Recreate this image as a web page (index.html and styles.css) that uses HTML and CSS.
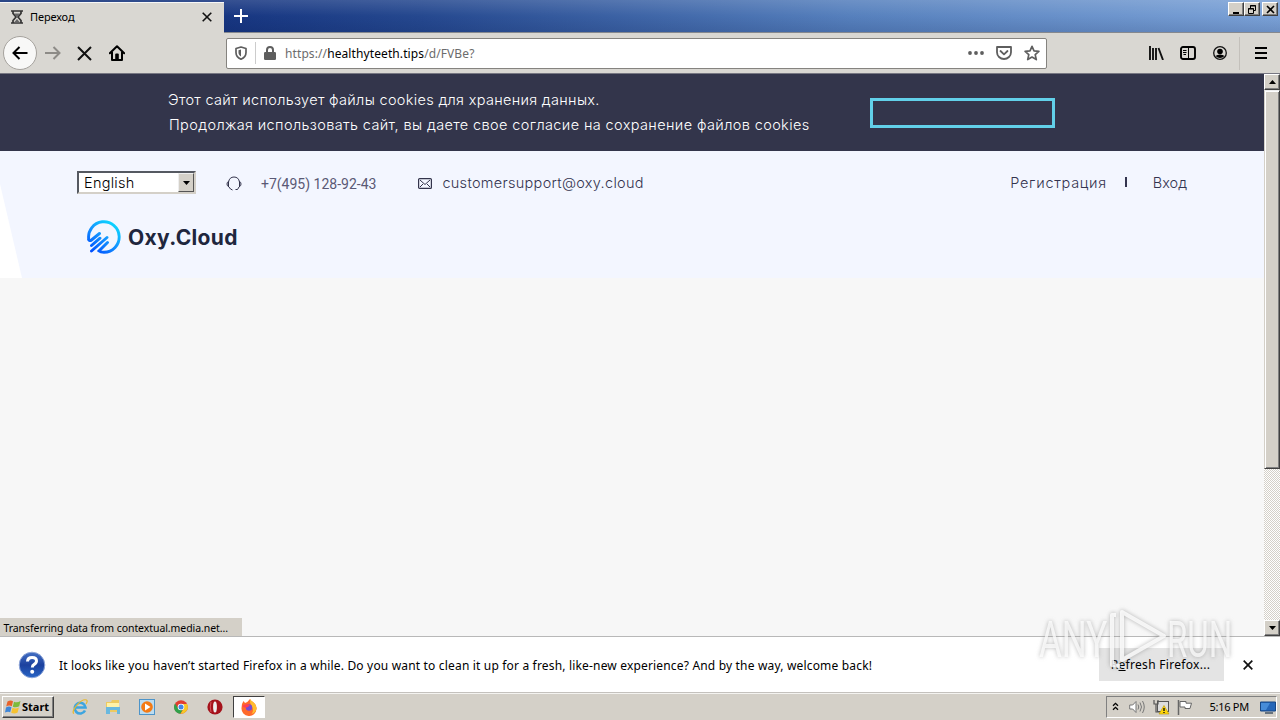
FILE: index.html
```html
<!DOCTYPE html>
<html lang="ru">
<head>
<meta charset="utf-8">
<title>Переход</title>
<link rel="stylesheet" href="styles.css">
</head>
<body>
<div class="screen">
  <header class="titlebar">
    <div class="tab">
      <svg class="hourglass" width="12" height="14" viewBox="0 0 12 14"><path d="M0 1h12M0 13h12M2 1v2.500L5 7l-3 3.500V13M10 1v2.500L7 7l3 3.500V13" fill="none" stroke="#333" stroke-width="1.700"/><path d="M3 3.500h6L6 7zM6 9l3 3.500H3z" fill="#666"/></svg>
      <span class="tab-title">Переход</span>
      <svg class="tab-close" width="10" height="10" viewBox="0 0 10 10"><path d="M.7.7l8.600 8.600M9.300.7L.7 9.300" stroke="#111" stroke-width="1.600"/></svg>
    </div>
    <svg class="new-tab" width="14" height="14" viewBox="0 0 14 14"><path d="M7 0v14M0 7h14" stroke="#fff" stroke-width="2"/></svg>
    <div class="window-buttons">
      <span class="win-btn"><svg width="13" height="11" viewBox="0 0 13 11"><path d="M3 9h6" stroke="#000" stroke-width="2"/></svg></span>
      <span class="win-btn"><svg width="13" height="11" viewBox="0 0 13 11"><path d="M4.500 4V1.500h5v5H8M4 2h6M2.500 4.500h5v5h-5zM2 5h6" fill="none" stroke="#000"/></svg></span>
      <span class="win-btn close"><svg width="13" height="11" viewBox="0 0 13 11"><path d="M3 2l7 7M10 2L3 9" stroke="#000" stroke-width="1.600"/></svg></span>
    </div>
  </header>

  <nav class="toolbar">
    <span class="back"><svg width="16" height="14" viewBox="0 0 16 14"><path d="M15.500 7H1.500M7.500 1l-6 6 6 6" fill="none" stroke="#000" stroke-width="2"/></svg></span>
    <svg class="forward" width="16" height="14" viewBox="0 0 16 14"><path d="M0 7h14.500M8.500 1l6 6-6 6" fill="none" stroke="#8d8b87" stroke-width="2"/></svg>
    <svg class="stop" width="15" height="15" viewBox="0 0 15 15"><path d="M1 1l13 13M14 1L1 14" stroke="#111" stroke-width="2"/></svg>
    <svg class="home" width="16" height="16" viewBox="0 0 16 16"><path d="M.8 8.200L8 1.200l7.200 7M3 7v8h10V7" fill="none" stroke="#000" stroke-width="2" stroke-linejoin="round" stroke-linecap="round"/><path d="M6.200 15V9.500q0-1 1-1h1.600q1 0 1 1V15z"/></svg>
    <div class="urlbar">
      <svg class="shield" width="12" height="14" viewBox="0 0 12 14"><path d="M6 1l5 1.500v4C11 10 9 12 6 13.200 3 12 1 10 1 6.500v-4z" fill="none" stroke="#5e5e5e" stroke-width="1.700" stroke-linejoin="round"/><path d="M6 3.500v7C4.300 9.500 3.500 8.300 3.500 6.500V4.200z" fill="#5e5e5e"/></svg>
      <i class="url-rule"></i>
      <svg class="lock" width="12" height="14" viewBox="0 0 12 14"><path d="M3 7V4a3 3 0 0 1 6 0v3" fill="none" stroke="#5e5e5e" stroke-width="2"/><rect y="6" width="12" height="8" rx="1.300" fill="#5e5e5e"/></svg>
      <span class="url">https://<b>healthyteeth.tips</b>/d/FVBe?</span>
      <svg class="dots" width="16" height="4" viewBox="0 0 16 4" fill="#5e5e5e"><circle cx="2" cy="2" r="1.900"/><circle cx="8" cy="2" r="1.900"/><circle cx="14" cy="2" r="1.900"/></svg>
      <svg class="pocket" width="16" height="14" viewBox="0 0 16 14" fill="none" stroke="#5e5e5e" stroke-width="1.800" stroke-linejoin="round" stroke-linecap="round"><path d="M1 1h14v5.200a7 6.800 0 0 1-14 0z"/><path d="M4.500 5L8 8.300 11.500 5"/></svg>
      <svg class="star" width="16" height="16" viewBox="0 0 16 16"><path d="M8 1.300l2 4.500 4.900.5-3.700 3.300 1.100 5L8 12.100l-4.300 2.500 1.100-5L1.100 6.300 6 5.800z" fill="none" stroke="#5e5e5e" stroke-width="1.700" stroke-linejoin="round"/></svg>
    </div>
    <div class="tools">
      <svg width="16" height="14" viewBox="0 0 16 14"><path d="M2 0v14M5 2v12M8 2v12M10.500 2l4.500 12" stroke="#111" stroke-width="1.900"/></svg>
      <svg width="16" height="14" viewBox="0 0 16 14"><rect x="1" y="1" width="14" height="12" rx="2" fill="none" stroke="#000" stroke-width="1.900"/><path d="M8.500 1v12M3 4.500h3.500M3 6.500h3.500M3.500 8.500H6" stroke="#000"/></svg>
      <svg width="14" height="14" viewBox="0 0 14 14"><circle cx="7" cy="7" r="6.300" fill="none" stroke="#111" stroke-width="1.300"/><circle cx="7" cy="5.500" r="2.800"/><path d="M2.500 10q1.500-1.600 4.500-1.600t4.500 1.600Q9.500 12 7 12t-4.500-2z"/></svg>
      <i class="tool-rule"></i>
      <svg width="12" height="12" viewBox="0 0 12 12"><path d="M0 1h12M0 6h12M0 11h12" stroke="#000" stroke-width="2"/></svg>
    </div>
  </nav>

  <main class="viewport">
    <div class="page">
      <section class="cookies">
        <p class="cookie-text"><span class="line1">Этот сайт использует файлы cookies для хранения данных.</span><br><span class="line2">Продолжая использовать сайт, вы даете свое согласие на сохранение файлов cookies</span></p>
        <div class="accept"></div>
      </section>
      <section class="site-header">
        <svg class="wedge" width="22" height="94" viewBox="0 0 22 94"><path d="M0 0l22 94H0z" fill="#fff"/></svg>
        <div class="contact-row">
          <div class="select"><span>English</span><i class="drop"><svg width="7" height="4" viewBox="0 0 7 4"><path d="M0 0h7L3.500 4z"/></svg></i></div>
          <svg class="headset" width="16" height="15" viewBox="0 0 16 15" fill="none" stroke="#33344c"><path d="M2.500 11V6Q3.500 1 8 1t5.500 5v5"/><path d="M2.500 5.500Q1 6 1 8t1.500 2.500M13.500 5.500Q15 6 15 8t-1.500 2.500M3 11l1.500 2M13 11l-1.500 2.500H9.500M4.500 13l2 1"/></svg>
          <span class="phone">+7(495) 128-92-43</span>
          <svg class="mail" width="14" height="11" viewBox="0 0 14 11" fill="none" stroke="#33344c"><rect x=".6" y=".6" width="12.800" height="9.800" rx="1" stroke-width="1.200"/><path d="M2 2l5 4.500L12 2M2 9l3-3M12 9L9 6"/></svg>
          <span class="email">customersupport@oxy.cloud</span>
          <span class="register">Регистрация</span>
          <i class="sep"></i>
          <span class="login">Вход</span>
        </div>
        <div class="brand">
          <svg width="34" height="34" viewBox="0 0 34 34"><defs><linearGradient id="oxy" gradientUnits="userSpaceOnUse" x1="28" y1="2" x2="6" y2="32"><stop offset="0" stop-color="#0cdcff"/><stop offset=".5" stop-color="#1496ff"/><stop offset="1" stop-color="#0050ff"/></linearGradient></defs><g fill="none" stroke="url(#oxy)" stroke-width="2.900" stroke-linecap="round"><path d="M1.800 19.500A15.300 15.300 0 1 1 17 32.300Q13.500 32.300 12 31L20.500 22.500"/><path d="M1.800 19.500Q2.500 21.500 4.500 20L12.500 13.500M4.500 25.500L13 18.200M4.500 31L20 17.500"/></g></svg>
          <span>Oxy.Cloud</span>
        </div>
      </section>
      <div class="page-space"></div>
      <div class="status">Transferring data from contextual.media.net...</div>
    </div>
    <aside class="scrollbar">
      <span class="sb-btn"><svg width="7" height="4" viewBox="0 0 7 4"><path d="M0 4h7L3.500 0z"/></svg></span>
      <span class="thumb"></span>
      <span class="track"></span>
      <span class="sb-btn"><svg width="7" height="4" viewBox="0 0 7 4"><path d="M0 0h7L3.500 4z"/></svg></span>
    </aside>
  </main>

  <section class="notice">
    <svg class="help" width="28" height="28" viewBox="0 0 28 28"><defs><linearGradient id="hb" x1="0" y1="0" x2="0" y2="1"><stop offset="0" stop-color="#4470c4"/><stop offset=".5" stop-color="#1c419e"/><stop offset="1" stop-color="#2865c6"/></linearGradient></defs><circle cx="14" cy="14" r="12.800" fill="url(#hb)" stroke="#8fa6d8"/><path d="M9.500 10.500q.2-4 4.600-4 4.400 0 4.400 3.600 0 2-2.300 3.200-1.900 1-1.900 3.200" fill="none" stroke="#fff" stroke-width="3"/><circle cx="14.200" cy="20.800" r="2" fill="#fff"/></svg>
    <span class="notice-text">It looks like you haven’t started Firefox in a while. Do you want to clean it up for a fresh, like-new experience? And by the way, welcome back!</span>
    <span class="refresh"><span>R<u>e</u>fresh Firefox...</span></span>
    <svg class="notice-close" width="10" height="10" viewBox="0 0 10 10"><path d="M.7.7l8.600 8.600M9.300.7L.7 9.300" stroke="#111" stroke-width="1.700"/></svg>
  </section>

  <footer class="taskbar">
    <div class="start"><svg width="17" height="16" viewBox="0 0 17 16"><path d="M2.500 2.500Q5.500.5 8 2.200L6.800 7.200Q4 5.800 1.200 7.500z" fill="#e8622a"/><path d="M9 2.700q3 1.500 6.500-.7l-1.300 5.300Q11 9 7.800 7.700z" fill="#7dbb3c"/><path d="M1 8.500q2.800-1.600 5.500-.3l-1.300 5Q3 12 0 13.500z" fill="#3e86d8"/><path d="M7.500 8.700q3 1.500 6.400-.3l-1.300 5.200Q9.500 15.500 6.200 13.800z" fill="#f6c231"/></svg><b>Start</b></div>
    <div class="quick">
      <svg width="18" height="18" viewBox="0 0 18 18"><path d="M14 12.500A5.400 5.400 0 1 1 14.500 9.500H5" fill="none" stroke="#3da5e0" stroke-width="2.600"/><path d="M3 15.500C-1 14 10 0 15.500 2q1.500 1-.5 4" fill="none" stroke="#e7b82d" stroke-width="1.200"/></svg>
      <svg width="18" height="18" viewBox="0 0 18 18"><path d="M2 4h5l1-2h7v12H2z" fill="#edca61"/><path d="M3 5h12v4H3z" fill="#fff2a8"/><path d="M2 9h14v7h-3v-4H6v4H2z" fill="#69b8df"/></svg>
      <svg width="18" height="18" viewBox="0 0 18 18"><rect x="1.500" y="1.500" width="15" height="15" fill="#bcdcf0" stroke="#4d94c9"/><circle cx="9" cy="9" r="5.800" fill="#f47a14"/><path d="M7 5.500v7l5.500-3.500z" fill="#fff"/></svg>
      <svg width="18" height="18" viewBox="0 0 18 18"><circle cx="9" cy="9" r="6.800" fill="#e13d30"/><path d="M3 5.500A6.800 6.800 0 0 0 8.500 15.800L11.500 10 6 10z" fill="#30a14b"/><path d="M9.500 6h5.600A6.800 6.800 0 0 1 8.500 15.800L12 10z" fill="#f7c927"/><circle cx="9" cy="9" r="3.300" fill="#fff"/><circle cx="9" cy="9" r="2.500" fill="#4285e8"/></svg>
      <svg width="18" height="18" viewBox="0 0 18 18"><circle cx="9" cy="9" r="7.600" fill="#a5121b"/><ellipse cx="9" cy="9" rx="1.900" ry="5.500" fill="#eee"/><path d="M5 4Q3.500 9 5 14" stroke="#d8525a" fill="none"/></svg>
      <span class="running"><svg width="18" height="18" viewBox="0 0 18 18"><path d="M2 6l1.500-3 1.500 2q3-1 5-4 1 2 3 3 4 3 3.500 7A7.500 7.500 0 0 1 1.500 10z" fill="#ff6a2b"/><path d="M10 1q1 2 3 3 4 3 3.500 7-1 4-5 5 3-4 0-8-2-3-1.500-7z" fill="#ffbd2e"/><circle cx="9" cy="9.500" r="3.200" fill="#784bd1"/><path d="M2 8q4 4 8-1-4-2-8 1z" fill="#ff4051"/></svg></span>
    </div>
    <div class="tray">
      <svg class="chevrons" width="7" height="9" viewBox="0 0 7 9"><path d="M1 3.800l2.500-2.500L6 3.800M1 7.800l2.500-2.500L6 7.800" fill="none" stroke="#000" stroke-width="1.300"/></svg>
      <svg class="speaker" width="16" height="14" viewBox="0 0 16 14"><path d="M.7 5h3L7 1.500v11L3.700 9h-3z" fill="#fff" stroke="#777"/><path d="M9 4.500q1.500 2.500 0 5M11 2.500q3 4.500 0 9M13.500 1q3.500 6 0 12" fill="none" stroke="#777"/></svg>
      <svg class="network" width="17" height="16" viewBox="0 0 17 16"><rect x="4.500" y="2.500" width="11" height="10" fill="#ddd" stroke="#555"/><path d="M1 1v4h4V1M3 5v8h5" fill="none" stroke="#555" stroke-width="1.200"/><path d="M11 6.500l5 8.500H6z" fill="#ffd60a" stroke="#b89600" stroke-width=".6"/><path d="M11 9v3M11 13v1" stroke="#111" stroke-width="1.400"/></svg>
      <svg class="flag" width="16" height="15" viewBox="0 0 16 15"><path d="M1.500 0v15" stroke="#666" stroke-width="1.500"/><path d="M3 1.500h6v1.700h5.500L13 8.500H8V7H3z" fill="#fff" stroke="#666"/></svg>
      <span class="clock">5:16 PM</span>
      <svg class="desktop" width="16" height="13" viewBox="0 0 16 13"><path d="M.5 1h15v9H.5z" fill="#2566b8" stroke="#174785"/><path d="M1 2h9L6 9H1z" fill="#478cd8"/><path d="M5 12h8" stroke="#456" stroke-width="1.500"/></svg>
    </div>
  </footer>

  <div class="watermark">
    <svg width="204" height="66" viewBox="0 0 204 66">
      <g fill="#fff" fill-opacity=".75">
        <text transform="translate(4 51) scale(.7 1)">ANY</text>
        <text transform="translate(132 51) scale(.66 1)">RUN</text>
      </g>
      <g fill="none" stroke="#fff" stroke-opacity=".8" stroke-width="4" stroke-linejoin="round">
        <path d="M87 6l42 24-42 24z"/>
        <path d="M81 9h-4v50l8 1"/>
      </g>
    </svg>
  </div>
</div>
</body>
</html>
```
FILE: styles.css
```css
* { box-sizing: border-box; }
body { margin: 0; font-family: "Noto Sans", "Open Sans", sans-serif; color: #000; }
svg { display: block; flex: none; }
i, b { font-style: normal; }
span { white-space: nowrap; }
.screen { position: relative; width: 1280px; height: 720px; display: flex; flex-direction: column; overflow: hidden; background: #d8d5d0; }

.titlebar { height: 33px; flex: none; display: flex; background: linear-gradient(180deg, #ffffff22, #ffffff00 50%, #00104022), linear-gradient(90deg, #0c2c74 0, #173681 225px, #25488f 420px, #5680bd 850px, #7ba2d7 1280px); border-bottom: 1px solid #85888e; }
.tab { width: 224px; height: 33px; margin-top: 2px; padding: 0 12px 0 11px; display: flex; align-items: center; background: #d9d7d2; border-top: 1px solid #f7f7f7; }
.tab-title { margin-left: 7px; padding-bottom: 5px; font-size: 11px; letter-spacing: -.1px; }
.hourglass, .tab-close { margin-bottom: 4px; }
.tab-close { margin-left: auto; }
.new-tab { margin: 9px 0 0 10px; }
.window-buttons { margin: 2px 2px 0 auto; display: flex; height: 14px; }
.win-btn, .sb-btn { display: flex; align-items: center; justify-content: center; background: #d4d0c8; border: 1px solid; border-color: #fff #404040 #404040 #fff; box-shadow: inset -1px -1px #808080; }
.win-btn { width: 16px; }
.close { margin-left: 2px; }

.toolbar { height: 41px; flex: none; display: flex; align-items: center; padding: 0 13px 0 3px; background: #d9d7d2; border-bottom: 1px solid #777782; }
.back { width: 34px; height: 34px; border-radius: 50%; background: #f8f8f7; border: 1px solid #a5a29d; display: flex; align-items: center; justify-content: center; }
.forward { margin-left: 8px; }
.stop { margin-left: 16px; }
.home { margin-left: 17px; }
.urlbar { width: 821px; height: 31px; margin-left: 101px; display: flex; align-items: center; padding: 0 6px 0 8px; background: #fff; border: 1px solid #85837f; border-radius: 2px; }
.url-rule { width: 1px; height: 22px; margin: 0 8px; background: #ccc; }
.url { margin-left: 9px; font-size: 12px; color: #6c6c6c; letter-spacing: .1px; }
.url b { font-weight: 400; color: #000; }
.dots { margin-left: auto; }
.pocket, .star { margin-left: 12px; }
.tools { margin-left: auto; display: flex; align-items: center; gap: 16px; }
.tools svg:nth-child(3) { margin-left: 1px; }
.tool-rule { width: 1px; height: 33px; margin: 0 -1px 0 -4px; background: #c3c0bb; }

.viewport { height: 562px; flex: none; display: flex; }
.page { width: 1264px; display: flex; flex-direction: column; background: #f7f7f7; }
.cookies { height: 77px; flex: none; display: flex; background: #33354b; color: #fff; padding-left: 168px; }
.cookie-text { width: 702px; margin: 13px 0 0; font: 300 14.500px/25px Inter, sans-serif; }
.line1 { letter-spacing: .32px; }
.line2 { letter-spacing: .38px; padding-left: 1px; }
.accept { width: 185px; height: 30px; margin-top: 24px; border: 3px solid #62d0e9; }
.site-header { position: relative; height: 127px; flex: none; background: #f3f6ff; }
.wedge { position: absolute; left: 0; top: 33px; }
.contact-row { display: flex; align-items: center; height: 63px; padding: 0 77px; font: 300 14.500px Inter, sans-serif; color: #33344f; }
.select { width: 119px; height: 23px; display: flex; justify-content: space-between; background: #fff; border: 2px solid; border-color: #555961 #d4d0c8 #d4d0c8 #555961; padding-left: 5px; color: #000; line-height: 20px; letter-spacing: .25px; }
.drop { width: 16px; height: 19px; display: flex; align-items: center; justify-content: center; background: #d4d0c8; border: 1px solid; border-color: #eee #555 #555 #eee; }
.headset { margin: 2px 0 0 30px; }
.phone { margin: 3px 0 0 19px; font: 400 14px Roboto, sans-serif; color: #5a5975; }
.mail { margin: 2px 0 0 42px; }
.email { margin-left: 10px; letter-spacing: .3px; }
.register { margin-left: auto; letter-spacing: .72px; }
.sep { width: 2px; height: 10px; margin: 0 26px 2px 18px; background: #33344f; }
.brand { display: flex; align-items: center; gap: 7px; margin: 6px 0 0 87px; font: 700 21px Inter, sans-serif; letter-spacing: .35px; color: #20263d; }
.page-space { flex: 1; }
.status { width: 242px; height: 18px; flex: none; background: #d4d0c8; font-size: 10.500px; line-height: 20px; padding-left: 3.500px; letter-spacing: -.07px; white-space: nowrap; }

.scrollbar { width: 16px; display: flex; flex-direction: column; }
.sb-btn { width: 16px; height: 16px; flex: none; }
.thumb { height: 379px; flex: none; background: #d4d0c8; border: 1px solid; border-color: #eee #404040 #404040 #d4d0c8; box-shadow: inset 1px 1px #fff, inset -1px -1px #808080; }
.track { flex: 1; background: repeating-conic-gradient(#d4d0c8 0 25%, #fff 0 50%) 0 0 / 2px 2px; }

.notice { height: 57px; flex: none; display: flex; align-items: center; background: #fff; border-top: 1px solid #b8b8b8; border-bottom: 1px solid #c4c1bd; padding: 0 27px 0 18px; font-size: 12px; }
.notice-text { margin-left: 13px; padding-top: 1px; letter-spacing: .173px; }
.refresh { width: 125px; height: 33px; margin-left: auto; padding-right: 2px; background: #e4e4e4; display: flex; align-items: center; justify-content: center; letter-spacing: .3px; }
.notice-close { margin-left: 19px; }

.taskbar { flex: 1; display: flex; align-items: center; background: #d4d0c8; border-top: 1px solid #f4f3f0; padding: 0 3px 0 2px; }
.start { width: 52px; height: 22px; display: flex; align-items: center; padding: 0 0 1px 2px; border: 1px solid; border-color: #fff #404040 #404040 #fff; box-shadow: inset -1px -1px #808080; font-size: 11px; }
.quick { display: flex; align-items: center; gap: 15.750px; margin-left: 16.500px; }
.running { width: 32px; height: 22px; margin-left: -6.500px; background: #fff; border: 1px solid; border-color: #404040 #fff #fff #404040; display: flex; align-items: center; justify-content: center; }
.tray { width: 171px; height: 22px; margin-left: auto; display: flex; align-items: center; border: 1px solid; border-color: #808080 #fff #fff #808080; padding: 0 0 0 5px; }
.chevrons { margin-bottom: 2px; }
.speaker { margin-left: 10px; }
.network { margin-left: 8px; }
.flag { margin-left: 7px; }
.clock { margin-left: auto; padding-bottom: 1px; font-size: 11px; letter-spacing: -.25px; }
.desktop { margin-left: 11px; }
.watermark { position: absolute; left: 1035px; top: 606px; font: 400 50px Roboto, sans-serif; filter: drop-shadow(0 0 2px #777a); pointer-events: none; }
```
